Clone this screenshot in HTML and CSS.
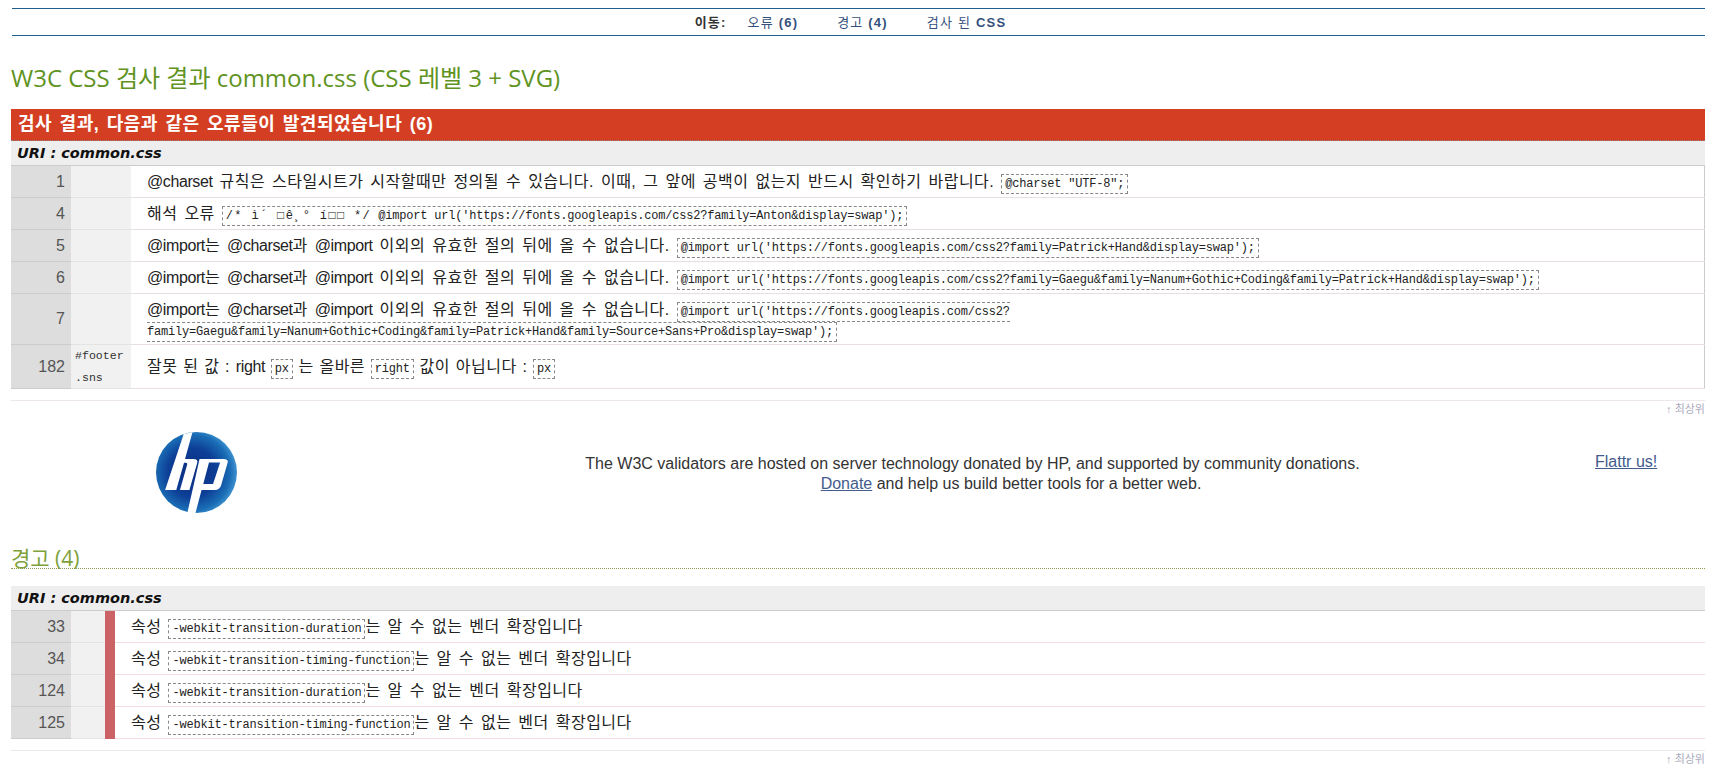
FILE: index.html
```html
<!DOCTYPE html>
<html lang="ko">
  <head>
    <meta charset="utf-8" />
    <title>W3C CSS 검사 결과 common.css</title>
    <link rel="stylesheet" href="styles.css">
  </head>
  <body>
    <div class="nav">
      <span class="nav-label">이동:</span>
      <a href="#errors">오류 <b>(6)</b></a>
      <a href="#warnings">경고 <b>(4)</b></a>
      <a href="#css">검사 된 <b>CSS</b></a>
    </div>

    <h1 class="page-title">W3C CSS 검사 결과 common.css (CSS 레벨 3 + SVG)</h1>

    <h2 class="error-bar">검사 결과, 다음과 같은 오류들이 발견되었습니다 (6)</h2>
    <div class="uri">URI : common.css</div>
    <table class="results errors">
      <tr>
        <td class="line">1</td>
        <td class="sel"></td>
        <td class="msg"><span class="en">@charset</span> 규칙은 스타일시트가 시작할때만 정의될 수 있습니다. 이때, 그 앞에 공백이 없는지 반드시 확인하기 바랍니다. <code>@charset "UTF-8";</code></td>
      </tr>
      <tr>
        <td class="line">4</td>
        <td class="sel"></td>
        <td class="msg">해석 오류 <code><span class="garbled">/* ì´ □ê¸° í□□ */</span> @import url('https://fonts.googleapis.com/css2?family=Anton&amp;display=swap');</code></td>
      </tr>
      <tr>
        <td class="line">5</td>
        <td class="sel"></td>
        <td class="msg"><span class="en">@import</span>는 <span class="en">@charset</span>과 <span class="en">@import</span> 이외의 유효한 절의 뒤에 올 수 없습니다. <code>@import url('https://fonts.googleapis.com/css2?family=Patrick+Hand&amp;display=swap');</code></td>
      </tr>
      <tr>
        <td class="line">6</td>
        <td class="sel"></td>
        <td class="msg"><span class="en">@import</span>는 <span class="en">@charset</span>과 <span class="en">@import</span> 이외의 유효한 절의 뒤에 올 수 없습니다. <code>@import url('https://fonts.googleapis.com/css2?family=Gaegu&amp;family=Nanum+Gothic+Coding&amp;family=Patrick+Hand&amp;display=swap');</code></td>
      </tr>
      <tr>
        <td class="line">7</td>
        <td class="sel"></td>
        <td class="msg msg-wrapped"><span class="en">@import</span>는 <span class="en">@charset</span>과 <span class="en">@import</span> 이외의 유효한 절의 뒤에 올 수 없습니다. <code>@import url('https://fonts.googleapis.com/css2?<br>family=Gaegu&amp;family=Nanum+Gothic+Coding&amp;family=Patrick+Hand&amp;family=Source+Sans+Pro&amp;display=swap');</code></td>
      </tr>
      <tr>
        <td class="line">182</td>
        <td class="sel">#footer .sns</td>
        <td class="msg msg-value">잘못 된 값 : <span class="en">right</span> <code>px</code> 는 올바른 <code>right</code> 값이 아닙니다 : <code>px</code></td>
      </tr>
    </table>
    <div class="rule"></div>
    <a class="top-link" href="#top">↑ 최상위</a>

    <div class="sponsor">
      <div class="sponsor-logo">
        <svg width="81" height="81" viewBox="18 20 240 240">
          <defs>
            <radialGradient id="hpBlue" cx="0.45" cy="0.5" r="0.55">
              <stop offset="0" stop-color="#0b2d80"/>
              <stop offset="0.55" stop-color="#0d3f96"/>
              <stop offset="0.85" stop-color="#1a6db5"/>
              <stop offset="1" stop-color="#3f93d0"/>
            </radialGradient>
          </defs>
          <circle cx="138" cy="140" r="120" fill="url(#hpBlue)"/>
          <path fill="#fff" d="M100 26 L126 21 L104 100 L128 100 Q144 100 140 112 L117 192 L89 192 L110 118 Q112 111 106 111 L101 111 L78 192 L45 192 Z"/>
          <path fill="#fff" fill-rule="evenodd" d="M147 100 L218 100 Q234 100 230 112 L211 178 Q207 192 192 192 L153 192 L135 260 Q122 261 111 259 Z M175 110 L208 110 L187 174 L158 174 Z"/>
        </svg>
      </div>
      <p class="sponsor-text">The W3C validators are hosted on server technology donated by HP, and supported by community donations.<span class="sponsor-second"><a href="#donate">Donate</a> and help us build better tools for a better web.</span></p>
      <div class="sponsor-flattr"><a href="#flattr">Flattr us!</a></div>
    </div>

    <h2 class="warn-title">경고 (4)</h2>
    <div class="uri">URI : common.css</div>
    <table class="results warnings">
      <tr>
        <td class="line">33</td>
        <td class="sel"></td>
        <td class="level"></td>
        <td class="msg">속성 <code>-webkit-transition-duration</code>는 알 수 없는 벤더 확장입니다</td>
      </tr>
      <tr>
        <td class="line">34</td>
        <td class="sel"></td>
        <td class="level"></td>
        <td class="msg">속성 <code>-webkit-transition-timing-function</code>는 알 수 없는 벤더 확장입니다</td>
      </tr>
      <tr>
        <td class="line">124</td>
        <td class="sel"></td>
        <td class="level"></td>
        <td class="msg">속성 <code>-webkit-transition-duration</code>는 알 수 없는 벤더 확장입니다</td>
      </tr>
      <tr>
        <td class="line">125</td>
        <td class="sel"></td>
        <td class="level"></td>
        <td class="msg">속성 <code>-webkit-transition-timing-function</code>는 알 수 없는 벤더 확장입니다</td>
      </tr>
    </table>
    <div class="rule"></div>
    <a class="top-link" href="#top">↑ 최상위</a>
  </body>
</html>
```
FILE: styles.css
```css
body {
  margin: 0;
  padding: 8px 22px 0 11px;
  background-color: #fff;
  color: #000;
  font-family: "Liberation Sans", "Noto Sans CJK KR", sans-serif;
  font-size: 15px;
}

a {
  color: #445b8c;
}

.nav {
  display: flex;
  justify-content: center;
  align-items: center;
  gap: 39px;
  height: 24px;
  margin-left: 1px;
  padding: 0 16px 2px 0;
  border-top: 1px solid #1f5f8f;
  border-bottom: 1px solid #1f5f8f;
  font-size: 13px;
  letter-spacing: 1.2px;
  color: #333;
}

.nav a {
  color: #34507c;
  text-decoration: none;
}

.nav-label {
  margin-right: -18px;
  font-weight: bold;
}

.page-title {
  margin: 29px 0 0;
  height: 44px;
  font-family: "Open Sans", "Noto Sans CJK KR", sans-serif;
  font-size: 24px;
  font-weight: normal;
  line-height: 26px;
  color: #5f9322;
}

.error-bar {
  margin: 0;
  height: 32px;
  padding-left: 7px;
  background-color: #d43f23;
  border-bottom: 1px dotted #888;
  box-sizing: border-box;
  font-size: 18px;
  line-height: 31px;
  letter-spacing: 0.5px;
  word-spacing: 2px;
  color: #fff;
}

.uri {
  height: 25px;
  padding-left: 6px;
  background-color: #eee;
  border-bottom: 1px solid #ccc;
  box-sizing: border-box;
  font-family: "DejaVu Sans", sans-serif;
  font-size: 14.5px;
  font-weight: bold;
  font-style: italic;
  line-height: 24px;
  color: #111;
}

.results {
  width: 100%;
  border-collapse: collapse;
}

.errors {
  border-right: 1px solid #ccc;
}

.results td {
  padding: 0;
  border-bottom: 1px solid #e8dfe3;
}

.results .line {
  width: 60px;
  padding-right: 6px;
  box-sizing: border-box;
  background-color: #ddd;
  border-bottom-color: #ccc;
  text-align: right;
  font-size: 16px;
  color: #555;
}

.results .sel {
  width: 60px;
  padding-left: 4px;
  box-sizing: border-box;
  background-color: #f1f1f1;
  border-bottom-color: #e4e4e4;
  font-family: "Liberation Mono", monospace;
  font-size: 11.6px;
  line-height: 21.5px;
  color: #333;
}

.results .msg {
  padding: 6px 0 5px 16px;
  font-size: 16px;
  line-height: 20px;
  letter-spacing: 0.5px;
  word-spacing: 2px;
  color: #222;
}

.results .msg-wrapped {
  padding-bottom: 4px;
}

.results .msg-value {
  word-spacing: 0.8px;
}

.en {
  letter-spacing: -0.4px;
}

.results .level {
  width: 10px;
  background-color: #cb6266;
  border-bottom: none;
}

.warnings .sel {
  width: 34px;
}

.warnings td.msg {
  border-bottom-color: #f3dde0;
}

code {
  padding: 2px 3px;
  border: 1px dashed #888;
  font-family: "Liberation Mono", monospace;
  font-size: 12px;
  line-height: 14px;
  letter-spacing: -0.2px;
  word-spacing: 0;
  color: #222;
}

.garbled {
  letter-spacing: 1.35px;
}

.rule {
  height: 1px;
  margin-top: 11px;
  background-color: #eee8ec;
}

.top-link {
  display: block;
  text-align: right;
  font-size: 11px;
  line-height: 16px;
  color: #aab;
  text-decoration: none;
}

.sponsor {
  display: flex;
  height: 125px;
  margin-top: 5px;
  font-size: 16px;
}

.sponsor-logo {
  width: 574px;
  padding: 10px 0 0 145px;
  box-sizing: border-box;
}

.sponsor-text {
  width: 775px;
  margin: 32px 0 0;
  font-size: 16px;
  line-height: 20px;
  text-align: center;
  color: #333;
}

.sponsor-second {
  display: block;
  margin-left: 77px;
}

.sponsor-flattr {
  margin: 30px 0 0 235px;
  line-height: 20px;
}

.warn-title {
  margin: 0 0 17px;
  height: 22px;
  border-bottom: 1px dotted #8a9a50;
  box-sizing: border-box;
  font-family: "Open Sans", "Noto Sans CJK KR", sans-serif;
  font-size: 21px;
  font-weight: normal;
  line-height: 22px;
  color: #7ea13a;
}
```
